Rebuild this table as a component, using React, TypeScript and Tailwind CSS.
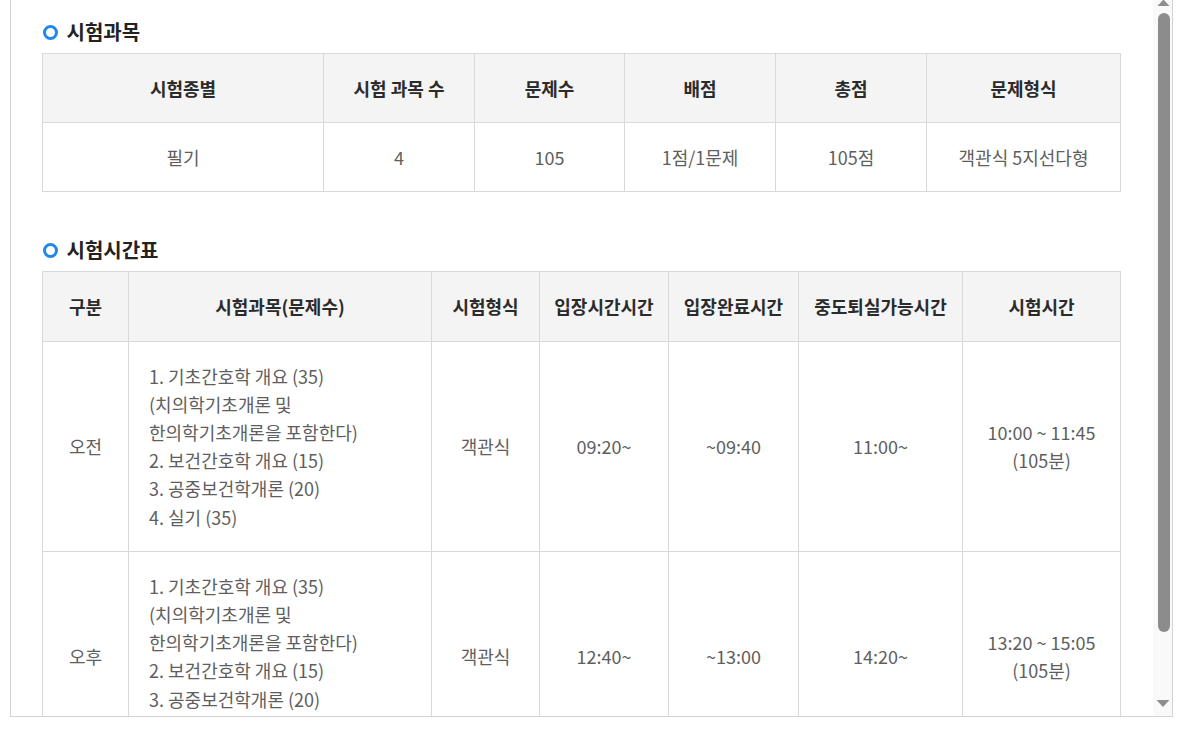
const subjectHead = ['시험종별', '시험 과목 수', '문제수', '배점', '총점', '문제형식']
const subjectRow = ['필기', '4', '105', '1점/1문제', '105점', '객관식 5지선다형']
const subjectCols = ['w-[281px]', 'w-[151px]', 'w-[150px]', 'w-[151px]', 'w-[151px]', '']

const timeHead = ['구분', '시험과목(문제수)', '시험형식', '입장시간시간', '입장완료시간', '중도퇴실가능시간', '시험시간']
const timeCols = ['w-[86px]', 'w-[303px]', 'w-[108px]', 'w-[129px]', 'w-[130px]', 'w-[164px]', '']

const subjects = [
    '1. 기초간호학 개요 (35)',
    '(치의학기초개론 및',
    '한의학기초개론을 포함한다)',
    '2. 보건간호학 개요 (15)',
    '3. 공중보건학개론 (20)',
    '4. 실기 (35)',
]

const timeRows = [
    { part: '오전', enter: '09:20~', done: '~09:40', leave: '11:00~', time: '10:00 ~ 11:45' },
    { part: '오후', enter: '12:40~', done: '~13:00', leave: '14:20~', time: '13:20 ~ 15:05' },
]

const th = 'border border-[#d9d9d9] bg-[#f4f4f4] py-5 text-center font-bold text-[#2b2b2b]'
const td = 'border border-[#d9d9d9] py-5 text-center align-middle text-[#5e5e5e]'

const Title = ({ children }: { children: string }) => (
    <h2 className="flex items-center gap-[9px] text-[20px] font-bold leading-6 text-[#222]">
        <span className="ml-[0.5px] block h-[15px] w-[15px] rounded-full border-[3.5px] border-[#2187e8]" />
        {children}
    </h2>
)

// classic scrollbar drawing, thumb at the top of the track
const ScrollBar = () => (
    <svg width="19" height="716" className="shrink-0">
        <rect width="19" height="716" fill="#f9f9f9" />
        <polygon points="10.5,-0.5 4.5,6 16.5,6" fill="#8e8e8e" />
        <rect x="5" y="13" width="12" height="619" rx="6" fill="#8c8c8c" />
        <polygon points="3.5,700 16.5,700 10,707" fill="#8e8e8e" />
    </svg>
)

const App = () => (
    <div
        className="ml-[10px] flex h-[717px] w-[1163px] border-x border-b border-[#d3d3d3] bg-white"
        style={{ fontFamily: '"Noto Sans CJK KR", "Noto Sans", sans-serif' }}
    >
        <div className="h-[716px] flex-1 overflow-hidden">
            <div className="pl-[31px] pr-[32px] pt-5 pb-8 text-[18px] leading-[28.2px]">
                <Title>시험과목</Title>
                <table className="mt-[9px] w-full table-fixed border-collapse">
                    <colgroup>
                        {subjectCols.map((c, i) => (
                            <col key={i} className={c} />
                        ))}
                    </colgroup>
                    <thead>
                        <tr>
                            {subjectHead.map((h) => (
                                <th key={h} className={th}>
                                    {h}
                                </th>
                            ))}
                        </tr>
                    </thead>
                    <tbody>
                        <tr>
                            {subjectRow.map((v, i) => (
                                <td key={i} className={td}>
                                    {v}
                                </td>
                            ))}
                        </tr>
                    </tbody>
                </table>

                <div className="mt-[46px]">
                    <Title>시험시간표</Title>
                </div>
                <table className="mt-[9px] w-full table-fixed border-collapse">
                    <colgroup>
                        {timeCols.map((c, i) => (
                            <col key={i} className={c} />
                        ))}
                    </colgroup>
                    <thead>
                        <tr>
                            {timeHead.map((h) => (
                                <th key={h} className={th}>
                                    {h}
                                </th>
                            ))}
                        </tr>
                    </thead>
                    <tbody>
                        {timeRows.map((r) => (
                            <tr key={r.part}>
                                <td className={td}>{r.part}</td>
                                <td className={`${td} !text-left pl-5`}>
                                    {subjects.map((s) => (
                                        <div key={s}>{s}</div>
                                    ))}
                                </td>
                                <td className={td}>객관식</td>
                                <td className={td}>{r.enter}</td>
                                <td className={td}>{r.done}</td>
                                <td className={td}>{r.leave}</td>
                                <td className={td}>
                                    <div>{r.time}</div>
                                    <div>(105분)</div>
                                </td>
                            </tr>
                        ))}
                    </tbody>
                </table>
            </div>
        </div>
        <ScrollBar />
    </div>
)

export default App
